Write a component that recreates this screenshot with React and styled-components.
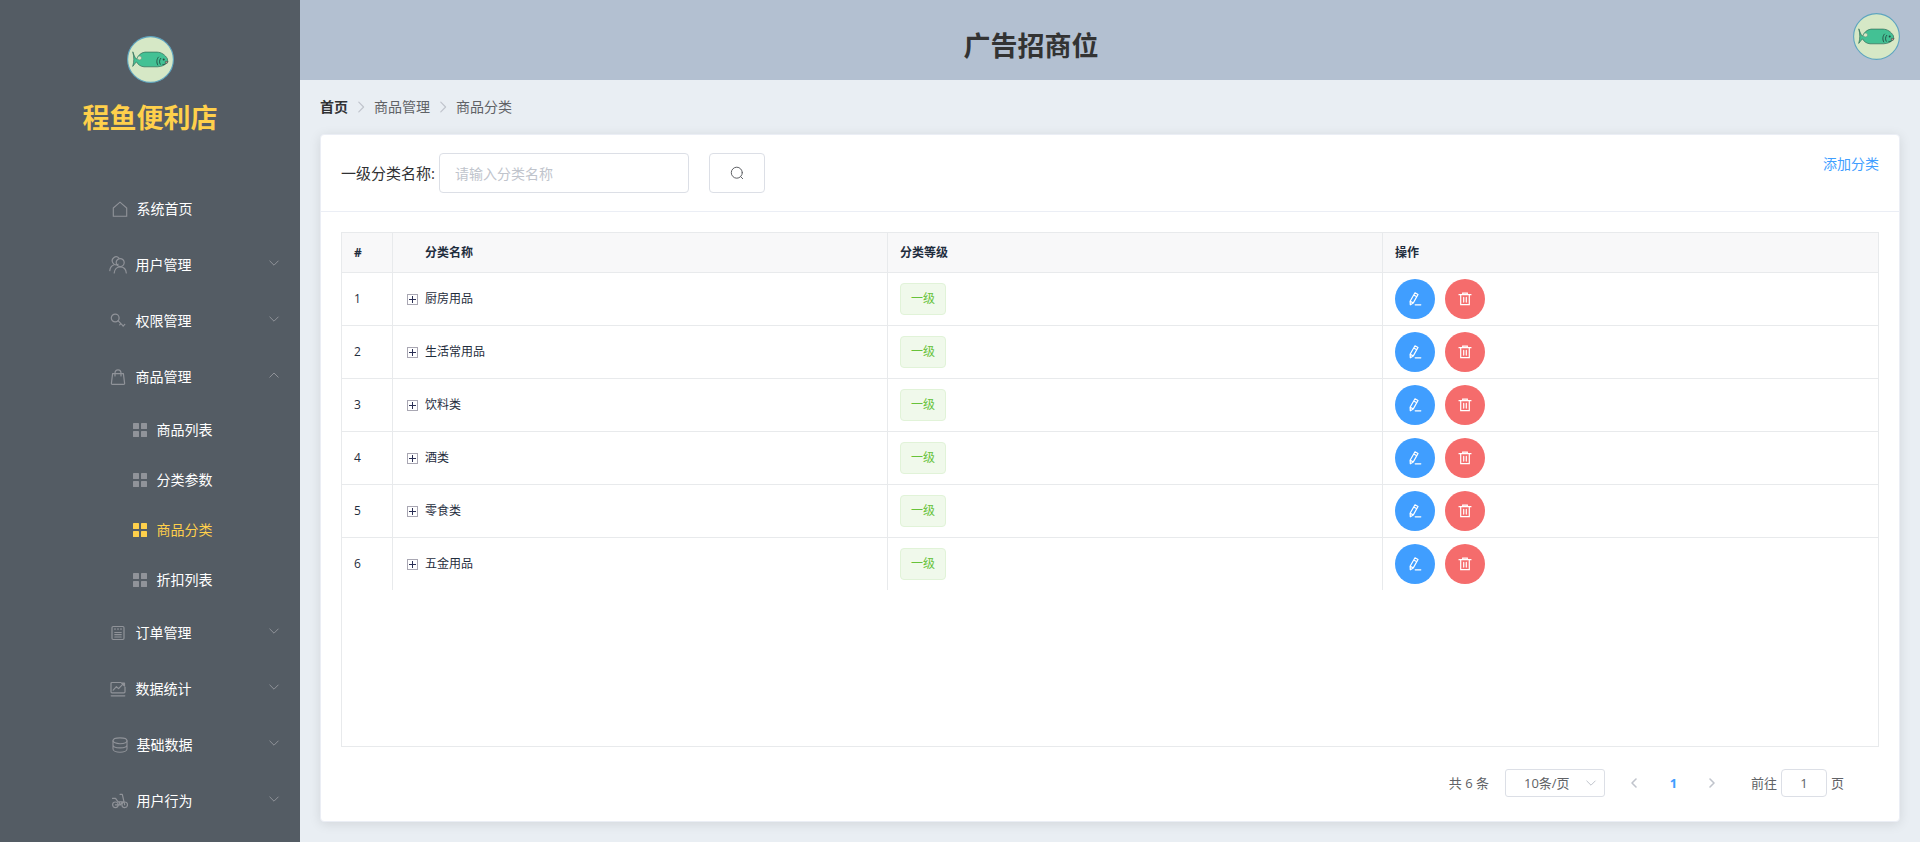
import React, { useState } from "react";
import styled, { createGlobalStyle, css } from "styled-components";

const GlobalStyle = createGlobalStyle`
  *, *::before, *::after { box-sizing: border-box; }
  body {
    margin: 0;
    font-family: "Open Sans", "Noto Sans CJK SC", sans-serif;
    font-size: 14px;
    line-height: 20px;
    color: #303133;
    background: #e9eef3;
  }
  button, input, select { font: inherit; color: inherit; margin: 0; }
  a { text-decoration: none; }
`;

const Page = styled.div`
  display: flex;
  min-height: 100vh;
`;

const Sidebar = styled.aside`
  flex: 0 0 300px;
  background: #545c64;
  padding-top: 36px;
`;

const Brand = styled.div`
  display: flex;
  flex-direction: column;
  align-items: center;
  gap: 15px;
  height: 145px;
`;

const Avatar = styled.svg`
  display: block;
  width: 47px;
  height: 47px;
  flex: none;
`;

const Title = styled.h1`
  margin: 0;
  font-size: 27px;
  line-height: 40px;
  font-weight: 700;
  color: ${(p) => p.$color};
`;

const MenuList = styled.ul`
  list-style: none;
  margin: 0;
  padding: 0;
`;

const menuRow = css`
  display: grid;
  grid-template-columns: 1fr auto 1fr;
  align-items: center;
  width: 100%;
  border: 0;
  background: none;
  font-size: 14px;
  cursor: pointer;
`;

const MenuButton = styled.button`
  ${menuRow}
  height: 56px;
  padding: 0 20px;
  color: #fff;
`;

const MenuLink = styled.a`
  ${menuRow}
  height: ${(p) => (p.$nested ? 50 : 56)}px;
  padding: 0 20px 0 ${(p) => (p.$nested ? 60 : 20)}px;
  color: ${(p) => (p.$active ? "#ffd04b" : "#fff")};
`;

const MenuLabel = styled.span`
  grid-column: 2;
  display: flex;
  align-items: center;
`;

const MenuIcon = styled.span`
  display: flex;
  justify-content: center;
  width: ${(p) => (p.$narrow ? 18 : 24)}px;
  margin-right: ${(p) => (p.$narrow ? 9 : 5)}px;
  color: ${(p) => (p.$active ? "#ffd04b" : "#909399")};
`;

const MenuArrow = styled.span`
  display: flex;
  justify-self: end;
  padding-bottom: 4px;
  color: #909399;
`;

const Content = styled.div`
  flex: 1;
  min-width: 0;
  display: flex;
  flex-direction: column;
`;

const Header = styled.header`
  display: flex;
  justify-content: space-between;
  height: 80px;
  padding: 13px 20px 0;
  background: #b3c0d1;
`;

const HeaderTitle = styled.div`
  flex: 0 0 90%;
  padding-top: 13px;
  text-align: center;
`;

const Main = styled.main`
  flex: 1;
  display: flex;
  flex-direction: column;
  gap: 17px;
  padding: 17px 20px 20px;
`;

const Breadcrumb = styled.nav`
  display: flex;
  align-items: center;
  color: #606266;
`;

const Crumb = styled.a`
  color: ${(p) => (p.$home ? "#303133" : "#606266")};
  font-weight: ${(p) => (p.$home ? 700 : 400)};
`;

const CrumbArrow = styled.span`
  display: flex;
  margin: 0 6px;
  color: #c0c4cc;
`;

const Card = styled.section`
  flex: 1;
  border: 1px solid #ebeef5;
  border-radius: 4px;
  background: #fff;
  box-shadow: 0 2px 12px rgba(0, 0, 0, 0.1);
`;

const CardHeader = styled.div`
  display: flex;
  justify-content: space-between;
  align-items: flex-start;
  padding: 18px 20px;
  border-bottom: 1px solid #ebeef5;
`;

const SearchForm = styled.form`
  display: flex;
  align-items: center;
  gap: 20px;
`;

const Field = styled.div`
  display: flex;
  align-items: center;
  gap: 4px;
  font-size: 15px;
`;

const TextInput = styled.input`
  width: 250px;
  height: 40px;
  padding: 0 15px;
  border: 1px solid #dcdfe6;
  border-radius: 4px;
  background: #fff;
  font-size: 14px;
  color: #606266;
  outline: none;
  &::placeholder { color: #c0c4cc; opacity: 1; }
`;

const SearchButton = styled.button`
  display: flex;
  align-items: center;
  justify-content: center;
  width: 56px;
  height: 40px;
  padding: 0;
  border: 1px solid #dcdfe6;
  border-radius: 4px;
  background: #fff;
  color: #606266;
  cursor: pointer;
`;

const AddLink = styled.a`
  line-height: 22px;
  color: #409eff;
`;

const CardBody = styled.div`
  padding: 20px 20px 24px;
`;

const TableFrame = styled.div`
  min-height: 515px;
  border: 1px solid #e8eaec;
`;

const Table = styled.table`
  width: 100%;
  table-layout: fixed;
  border-spacing: 0;
  font-size: 12px;
  color: #1f2d3d;
  text-align: left;
  col:first-child { width: 51px; }
  th, td {
    padding: 0 12px;
    border-right: 1px solid #e8eaec;
    border-bottom: 1px solid #e8eaec;
  }
  th { height: 40px; background: #f8f8f9; font-weight: 700; }
  td { height: 53px; }
  th:last-child, td:last-child { border-right: 0; }
  tbody tr:last-child td { height: 52px; border-bottom: 0; }
  th:nth-child(2) { padding-left: 32px; }
`;

const NameCell = styled.div`
  display: flex;
  align-items: center;
  gap: 7px;
  padding-left: 2px;
`;

const ExpandButton = styled.button`
  display: flex;
  padding: 0;
  border: 0;
  background: none;
  cursor: pointer;
`;

const Tag = styled.span`
  display: inline-block;
  height: 32px;
  padding: 0 10px;
  border: 1px solid #e1f3d8;
  border-radius: 4px;
  background: #f0f9eb;
  color: #67c23a;
  line-height: 30px;
  vertical-align: middle;
`;

const Actions = styled.div`
  display: flex;
  gap: 10px;
`;

const RoundButton = styled.button`
  display: flex;
  align-items: center;
  justify-content: center;
  width: 40px;
  height: 40px;
  padding: 0;
  border: 0;
  border-radius: 50%;
  background: ${(p) => (p.$danger ? "#f56c6c" : "#409eff")};
  color: #fff;
  cursor: pointer;
`;

const Pagination = styled.div`
  display: flex;
  align-items: center;
  justify-content: flex-end;
  margin-top: 22px;
  padding-right: 35px;
  font-size: 13px;
  color: #606266;
`;

const SizePicker = styled.div`
  display: grid;
  grid-template-columns: 1fr 20px;
  align-items: center;
  width: 100px;
  margin: 0 10px 0 16px;
  color: #c0c4cc;
  svg { grid-area: 1 / 2; pointer-events: none; }
`;

const SizeSelect = styled.select`
  grid-area: 1 / 1 / 2 / 3;
  appearance: none;
  width: 100%;
  height: 28px;
  padding: 0 18px;
  border: 1px solid #dcdfe6;
  border-radius: 3px;
  background: #fff;
  color: #606266;
  outline: none;
`;

const PagerButton = styled.button`
  display: flex;
  align-items: center;
  justify-content: center;
  width: 39px;
  height: 28px;
  padding: 0;
  border: 0;
  background: none;
  color: ${(p) => (p.$current ? "#409eff" : "#c0c4cc")};
  font-weight: 700;
  cursor: pointer;
`;

const Jump = styled.label`
  display: flex;
  align-items: center;
  gap: 4px;
  margin-left: 19px;
`;

const JumpInput = styled.input`
  width: 46px;
  height: 28px;
  padding: 0 3px;
  border: 1px solid #dcdfe6;
  border-radius: 4px;
  background: #fff;
  text-align: center;
  outline: none;
`;

function Line({ size = 16, width = 1, box = 16, join = "round", children }) {
  return (
    <svg width={size} height={size} viewBox={`0 0 ${box} ${box}`} fill="none" stroke="currentColor"
      strokeWidth={width} strokeLinejoin={join} strokeLinecap="round" aria-hidden="true">
      {children}
    </svg>
  );
}

const icons = {
  home: <Line join="miter" width={1.1}><path d="M1.300 7 8 1.200 14.700 7v8.300H1.300z" /></Line>,
  users: (
    <Line size={18} box={18} width={1.2}>
      <path d="M9.1 8.2A3.9 3.9 0 1 1 10 2.1" />
      <circle cx="11.2" cy="6.6" r="4" />
      <path d="M.8 14.6c.3-3 1.800-5 4.300-5.800M5.200 17c.2-3.600 2.600-6.200 6-6.200s5.800 2.600 6.100 6.200" />
    </Line>
  ),
  key: (
    <Line width={1.2}>
      <circle cx="5.200" cy="5" r="3.900" />
      <path d="m8 7.700 5.300 5.400M10.900 10.700l-1.200 1.200M14.800 11.400l-1.700 1.800" />
    </Line>
  ),
  bag: (
    <Line width={1.2}>
      <path d="M2.600 4.600h10.800l1.200 9.800q.1 1-1 1H2.400q-1.100 0-1-1z" />
      <path d="M5 7V4.300C5 1.900 6.200.8 8 .8s3 1.100 3 3.500V7" />
    </Line>
  ),
  grid: (
    <svg width="16" height="16" viewBox="0 0 16 16" fill="currentColor" aria-hidden="true">
      <rect x="1" y="1" width="6" height="6" rx=".6" />
      <rect x="9" y="1" width="6" height="6" rx=".6" />
      <rect x="1" y="9" width="6" height="6" rx=".6" />
      <rect x="9" y="9" width="6" height="6" rx=".6" />
    </svg>
  ),
  order: (
    <Line width={1.200}>
      <rect x="2" y="1.500" width="12" height="13" rx="1.200" />
      <path d="M5 3.500v1M8 3.500v1M11 3.500v1M4.800 7.500h6.400M4.800 9.700h6.400M4.800 12h6.400" />
    </Line>
  ),
  stats: (
    <Line width={1.200}>
      <path d="M11 1.500H2q-1 0-1 1v8.300q0 1 1 1h12q1 0 1-1V6M1.200 14.800h13.600" />
      <path d="m3.200 9.200 3.200-3.500 2.200 1.900 4.800-5" />
      <path d="M11.600 2.100h2.900V5z" fill="currentColor" />
    </Line>
  ),
  coins: (
    <Line width={1.1}>
      <ellipse cx="8" cy="3.800" rx="7" ry="2.900" />
      <path d="M1 3.800v8.200c0 1.800 3.100 3.200 7 3.200s7-1.400 7-3.200V3.800M1 8c0 1.600 3.100 2.900 7 2.900S15 9.600 15 8" />
    </Line>
  ),
  bike: (
    <Line width={1.200}>
      <circle cx="3.400" cy="11.800" r="2.800" />
      <circle cx="12.700" cy="11.800" r="2.800" />
      <path d="M.5 5.300h3l2.600 3.500h4M3.400 11.800h5l2.300-3M8 1.300h2.300l2.400 10.500M8.400 11.800 6.900 9" />
    </Line>
  ),
  down: <Line size={12} box={12}><path d="M1.800 4 6 8.200 10.200 4" /></Line>,
  up: <Line size={12} box={12}><path d="M1.800 8.200 6 4l4.200 4.200" /></Line>,
  crumb: <Line size={14} box={14} width={1.200}><path d="m4.800 2.200 4.800 4.800-4.800 4.800" /></Line>,
  prev: <Line size={12} box={12} width={1.600}><path d="M8 2 4 6l4 4" /></Line>,
  next: <Line size={12} box={12} width={1.600}><path d="m4 2 4 4-4 4" /></Line>,
  search: (
    <Line size={14} box={14}>
      <circle cx="6.800" cy="6.700" r="5.500" />
      <path d="m10.700 10.700 2 2" />
    </Line>
  ),
  edit: (
    <Line size={14} box={14} width={1.200}>
      <path d="M7 .8 10 2.500 5.300 10.900l-3 1.900-.2-3.600zM5.800 3l3 1.700M2.200 9.300l2.900 1.600M7.200 12.800h5.600" />
    </Line>
  ),
  trash: (
    <Line size={14} box={14} width={1.200} join="miter">
      <path d="M1 2.700h12M4.700 2.500V1.200h4.600v1.300M2.700 3v9.700h8.600V3M5.700 5.400v4.700M8.300 5.400v4.700" />
    </Line>
  ),
  plus: (
    <svg width="11" height="11" viewBox="0 0 11 11" fill="none" shapeRendering="crispEdges" aria-hidden="true">
      <rect x=".5" y=".5" width="10" height="10" fill="#fff" stroke="#a9a7b3" />
      <path d="M2 5.500h7M5.500 2v7" stroke="#2a2f55" />
    </svg>
  ),
};

function FishAvatar() {
  return (
    <Avatar viewBox="0 0 47 47" role="img" aria-label="logo">
      <circle cx="23.500" cy="23.500" r="22.900" fill="#d6e8c6" stroke="#5ea5c0" strokeWidth="1.100" />
      <path
        d="M5.800 15.800c1 2.800 2 6 3.800 7.400 1.500-3.800 4-6.400 8.400-7.100h12c4.500.2 8 2.600 10.400 6.600l.4 3.400c-2.700 3-5.800 4.500-10.300 4.700H17c-3.600-.3-6-2.300-7.600-5-1.300 1.500-2.400 3.200-3.700 4.600 1.600-4.800 1.300-9.600.1-14.600z"
        fill="#43c194" stroke="#336b58" strokeWidth=".7" strokeLinejoin="round"
      />
      <path d="M10.200 22.200c.6 2.200 3.900 2.300 4.300.1.200-1.900-1.400-2.500-2.600-2.100" fill="#d6e8c6" stroke="#6d8772" strokeWidth=".5" />
      <path d="M31.800 20.800c-2.100 1.900-2.600 5.500-.9 8.500M34 22c-1.700 1.900-1.900 4.400-.6 6.600M35.500 28.400c1.300.3 2.200 0 3-.8" fill="none" stroke="#24483e" strokeWidth=".9" />
      <circle cx="36.700" cy="23.400" r="1" fill="#24483e" />
      <path d="m38.400 25.300 2.600.2-.9 1.900-1.900-.5z" fill="#cf9a94" stroke="#24483e" strokeWidth=".5" />
    </Avatar>
  );
}

const menu = [
  { label: "系统首页", icon: "home" },
  { label: "用户管理", icon: "users", narrow: true, group: true },
  { label: "权限管理", icon: "key", narrow: true, group: true },
  {
    label: "商品管理", icon: "bag", narrow: true, group: true,
    children: ["商品列表", "分类参数", "商品分类", "折扣列表"],
  },
  { label: "订单管理", icon: "order", narrow: true, group: true },
  { label: "数据统计", icon: "stats", narrow: true, group: true },
  { label: "基础数据", icon: "coins", group: true },
  { label: "用户行为", icon: "bike", group: true },
];

const categories = ["厨房用品", "生活常用品", "饮料类", "酒类", "零食类", "五金用品"];

function MenuContent({ icon, label, narrow, active }) {
  return (
    <MenuLabel>
      <MenuIcon $narrow={narrow} $active={active}>{icons[icon]}</MenuIcon>
      {label}
    </MenuLabel>
  );
}

function MenuEntry({ item }) {
  if (!item.group) {
    return <li><MenuLink href="#"><MenuContent {...item} /></MenuLink></li>;
  }
  const open = Boolean(item.children);
  return (
    <li>
      <MenuButton type="button" aria-expanded={open}>
        <MenuContent {...item} />
        <MenuArrow>{open ? icons.up : icons.down}</MenuArrow>
      </MenuButton>
      {open && (
        <MenuList>
          {item.children.map((label) => {
            const active = label === "商品分类";
            return (
              <li key={label}>
                <MenuLink href="#" $nested $active={active} aria-current={active ? "page" : undefined}>
                  <MenuContent icon="grid" label={label} active={active} />
                </MenuLink>
              </li>
            );
          })}
        </MenuList>
      )}
    </li>
  );
}

export default function App() {
  const [query, setQuery] = useState("");
  const [page, setPage] = useState("1");
  return (
    <>
      <GlobalStyle />
      <Page>
        <Sidebar>
          <Brand>
            <FishAvatar />
            <Title $color="#ffd04b">程鱼便利店</Title>
          </Brand>
          <nav>
            <MenuList>
              {menu.map((item) => <MenuEntry key={item.label} item={item} />)}
            </MenuList>
          </nav>
        </Sidebar>
        <Content>
          <Header>
            <HeaderTitle><Title as="h2" $color="#333">广告招商位</Title></HeaderTitle>
            <FishAvatar />
          </Header>
          <Main>
            <Breadcrumb>
              <Crumb href="#" $home>首页</Crumb>
              <CrumbArrow>{icons.crumb}</CrumbArrow>
              <Crumb as="span">商品管理</Crumb>
              <CrumbArrow>{icons.crumb}</CrumbArrow>
              <Crumb as="span">商品分类</Crumb>
            </Breadcrumb>
            <Card>
              <CardHeader>
                <SearchForm onSubmit={(e) => e.preventDefault()}>
                  <Field>
                    <label htmlFor="category-name">一级分类名称:</label>
                    <TextInput id="category-name" placeholder="请输入分类名称" value={query}
                      onChange={(e) => setQuery(e.target.value)} />
                  </Field>
                  <SearchButton type="submit" aria-label="搜索">{icons.search}</SearchButton>
                </SearchForm>
                <AddLink href="#">添加分类</AddLink>
              </CardHeader>
              <CardBody>
                <TableFrame>
                  <Table>
                    <colgroup><col /><col /><col /><col /></colgroup>
                    <thead>
                      <tr><th>#</th><th>分类名称</th><th>分类等级</th><th>操作</th></tr>
                    </thead>
                    <tbody>
                      {categories.map((name, i) => (
                        <tr key={name}>
                          <td>{i + 1}</td>
                          <td>
                            <NameCell>
                              <ExpandButton type="button" aria-label="展开">{icons.plus}</ExpandButton>
                              {name}
                            </NameCell>
                          </td>
                          <td><Tag>一级</Tag></td>
                          <td>
                            <Actions>
                              <RoundButton type="button" aria-label="编辑">{icons.edit}</RoundButton>
                              <RoundButton type="button" $danger aria-label="删除">{icons.trash}</RoundButton>
                            </Actions>
                          </td>
                        </tr>
                      ))}
                    </tbody>
                  </Table>
                </TableFrame>
                <Pagination>
                  <span>共 6 条</span>
                  <SizePicker>
                    <SizeSelect aria-label="每页条数" defaultValue="10">
                      <option value="10">10条/页</option>
                    </SizeSelect>
                    {icons.down}
                  </SizePicker>
                  <PagerButton type="button" aria-label="上一页">{icons.prev}</PagerButton>
                  <PagerButton type="button" $current>1</PagerButton>
                  <PagerButton type="button" aria-label="下一页">{icons.next}</PagerButton>
                  <Jump>
                    前往
                    <JumpInput value={page} onChange={(e) => setPage(e.target.value)} />
                    页
                  </Jump>
                </Pagination>
              </CardBody>
            </Card>
          </Main>
        </Content>
      </Page>
    </>
  );
}
